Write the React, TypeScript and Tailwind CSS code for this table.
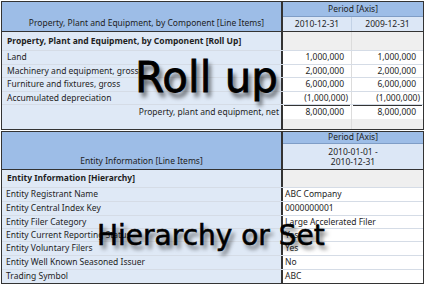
import React from 'react';

const tableFont = "font-['Noto_Sans',sans-serif] text-[8.5px] text-[#1e1e1e]";

type Line = { label: string; v1?: string; v2?: string; h: string };

const rollRows: Line[] = [
  { label: 'Land', v1: '1,000,000', v2: '1,000,000', h: 'h-[14px]' },
  { label: 'Machinery and equipment, gross', v1: '2,000,000', v2: '2,000,000', h: 'h-[13px]' },
  { label: 'Furniture and fixtures, gross', v1: '6,000,000', v2: '6,000,000', h: 'h-[14px]' },
  { label: 'Accumulated depreciation', v1: '(1,000,000)', v2: '(1,000,000)', h: 'h-[13px]' },
];

const entityRows: Line[] = [
  { label: 'Entity Registrant Name', v1: 'ABC Company', h: 'h-[14px]' },
  { label: 'Entity Central Index Key', v1: '0000000001', h: 'h-[14px]' },
  { label: 'Entity Filer Category', v1: 'Large Accelerated Filer', h: 'h-[13px]' },
  { label: 'Entity Current Reporting Status', v1: 'Yes', h: 'h-[13px]' },
  { label: 'Entity Voluntary Filers', v1: 'Yes', h: 'h-[14px]' },
  { label: 'Entity Well Known Seasoned Issuer', v1: 'No', h: 'h-[14px]' },
  { label: 'Trading Symbol', v1: 'ABC', h: 'h-[13px]' },
];

// positive numbers get the width of ")" as extra padding, accounting style
const num = (v: string) => (v.startsWith('(') ? 'pr-[3px]' : 'pr-[7px]');

const RollUpTable = () => (
  <div className={`w-[423px] border border-[#333] flex flex-col ${tableFont}`}>
    {/* Header */}
    <div className="flex h-[30px] border-b border-[#333]">
      <div className="w-[281px] shrink-0 border-r-2 border-[#333] bg-[#9dbde7] flex items-end justify-center pl-[10px] pb-[1px]">
        Property, Plant and Equipment, by Component [Line Items]
      </div>
      <div className="flex-1 flex flex-col">
        <div className="h-[15px] bg-[#9dbde7] border-b border-[#7f9dc6] flex items-center justify-center">
          Period [Axis]
        </div>
        <div className="flex-1 flex bg-[#dce7f6]">
          <div className="w-[69px] border-r border-[#c3d2e6] flex items-center justify-center">2010-12-31</div>
          <div className="flex-1 flex items-center justify-center">2009-12-31</div>
        </div>
      </div>
    </div>

    {/* Body */}
    <div className="flex h-[19px] border-b border-[#d5dce6]">
      <div className="w-[281px] shrink-0 border-r-2 border-[#333] bg-[#dfe9f6] flex items-center pl-[5px] font-bold">
        Property, Plant and Equipment, by Component [Roll Up]
      </div>
      <div className="w-[69px] border-r border-[#dcdcdc] bg-[#efefef]" />
      <div className="flex-1 bg-[#efefef]" />
    </div>
    {rollRows.map((r) => (
      <div key={r.label} className={`flex ${r.h} border-b border-[#d5dce6]`}>
        <div className="w-[281px] shrink-0 border-r-2 border-[#333] bg-[#dfe9f6] flex items-center pl-[5px]">
          {r.label}
        </div>
        <div className={`w-[69px] border-r border-[#dcdcdc] bg-white flex items-center justify-end ${num(r.v1!)}`}>{r.v1}</div>
        <div className={`flex-1 bg-white flex items-center justify-end ${num(r.v2!)}`}>{r.v2}</div>
      </div>
    ))}
    <div className="flex h-[14px]">
      <div className="w-[281px] shrink-0 border-r-2 border-[#333] bg-[#dfe9f6] flex items-center justify-end pr-[2px]">
        Property, plant and equipment, net
      </div>
      <div className="w-[69px] border-r border-[#dcdcdc] bg-white flex flex-col">
        <div className="flex-1 border-t border-[#333] border-b-[3px] border-b-[#555] border-double mx-[1px] flex items-center justify-end pr-[6px]">
          8,000,000
        </div>
      </div>
      <div className="flex-1 bg-white flex flex-col">
        <div className="flex-1 border-t border-[#333] border-b-[3px] border-b-[#555] border-double mx-[1px] flex items-center justify-end pr-[6px]">
          8,000,000
        </div>
      </div>
    </div>
    <div className="flex h-[10px]">
      <div className="w-[281px] shrink-0 border-r-2 border-[#333] bg-[#dfe9f6]" />
      <div className="w-[69px] border-r border-[#dcdcdc] bg-[#eeeeee]" />
      <div className="flex-1 bg-[#eeeeee]" />
    </div>
  </div>
);

const HierarchyTable = () => (
  <div className={`w-[423px] border border-[#333] flex flex-col ${tableFont}`}>
    {/* Header */}
    <div className="flex h-[38px] border-b border-[#333]">
      <div className="w-[281px] shrink-0 border-r-2 border-[#333] bg-[#9dbde7] flex items-end justify-center pb-[1px]">
        Entity Information [Line Items]
      </div>
      <div className="flex-1 flex flex-col">
        <div className="h-[12px] bg-[#9dbde7] border-b border-[#7f9dc6] flex items-center justify-center">
          Period [Axis]
        </div>
        <div className="flex-1 bg-[#dce7f6] flex flex-col items-center justify-center leading-[9.5px]">
          <span>2010-01-01 -</span>
          <span>2010-12-31</span>
        </div>
      </div>
    </div>

    {/* Body */}
    <div className="flex h-[18px] border-b border-[#d5dce6]">
      <div className="w-[281px] shrink-0 border-r-2 border-[#333] bg-[#dfe9f6] flex items-center pl-[5px] font-bold">
        Entity Information [Hierarchy]
      </div>
      <div className="flex-1 bg-[#efefef]" />
    </div>
    {entityRows.map((r, i) => (
      <div
        key={r.label}
        className={`flex ${r.h} ${i < entityRows.length - 1 ? 'border-b border-[#d5dce6]' : ''}`}
      >
        <div className="w-[281px] shrink-0 border-r-2 border-[#333] bg-[#dfe9f6] flex items-center pl-[4px]">
          {r.label}
        </div>
        <div className="flex-1 bg-white flex items-center pl-[2px]">{r.v1}</div>
      </div>
    ))}
  </div>
);

export default function App() {
  return (
    <div className="relative w-[425px] h-[284px] overflow-hidden bg-white pl-[1px] pt-[1px]">
      <RollUpTable />
      <div className="mt-[1px]">
        <HierarchyTable />
      </div>

      {/* Overlay captions */}
      <div className="absolute left-[135px] top-[57px] font-['DejaVu_Sans',sans-serif] text-[42px] leading-none text-black [-webkit-text-stroke:0.8px_black] [text-shadow:3px_5px_4px_rgba(0,0,0,0.6)]">
        Roll up
      </div>
      <div className="absolute left-[97px] top-[222px] font-['DejaVu_Sans',sans-serif] text-[28px] leading-none text-black [-webkit-text-stroke:0.6px_black] [text-shadow:3px_4px_4px_rgba(0,0,0,0.6)]">
        Hierarchy or Set
      </div>
    </div>
  );
}
